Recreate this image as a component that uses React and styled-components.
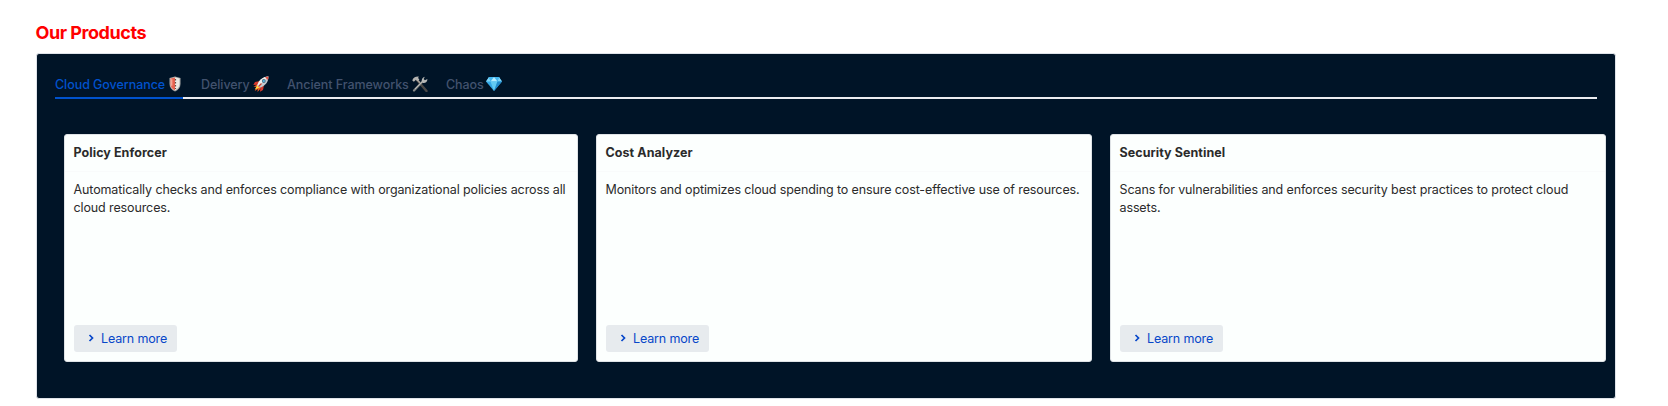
import React from 'react';
import styled, { createGlobalStyle } from 'styled-components';

const GlobalStyle = createGlobalStyle`
  * { box-sizing: border-box; }
  body { margin: 0; background: #fff; font-family: Inter, "Liberation Sans", sans-serif; }
`;

const Page = styled.main`
  height: 406px;
  padding: 20px 52px 0 36px;
  overflow: hidden;
`;

const Heading = styled.h1`
  margin: 0 0 7px -0.5px;
  height: 26px;
  font-size: 18px;
  line-height: 26px;
  font-weight: 700;
  letter-spacing: -0.45px;
  color: #ff0000;
`;

const Panel = styled.section`
  height: 346px;
  padding: 16px 8px 0 18px;
  border: 1px solid #dfe3e9;
  border-radius: 3px;
  background: #001427;
`;

const TabList = styled.nav`
  display: flex;
  gap: 18px;
  width: 1542px;
  height: 29px;
  box-shadow: inset 0 -2px #ebecf0;
`;

const Tab = styled.a`
  display: flex;
  align-items: center;
  width: ${(p) => p.$width}px;
  height: 29px;
  padding-top: 1px;
  border-bottom: 2px solid ${(p) => (p.$active ? '#0052cc' : 'transparent')};
  color: ${(p) => (p.$active ? '#0052cc' : '#42526e')};
  font-size: 12.5px;
  font-weight: 500;
  letter-spacing: -0.06px;
  white-space: nowrap;
`;

const Emoji = styled.svg`
  width: 16px;
  height: 16px;
  flex: none;
  margin-left: auto;
`;

const Cards = styled.div`
  display: grid;
  grid-template-columns: 514px 496px 496px;
  gap: 18px;
  margin: 35px 0 0 9px;
`;

const Card = styled.article`
  display: flex;
  flex-direction: column;
  height: 228px;
  padding: 0 9px 9px;
  border: 1px solid #dfe3e6;
  border-radius: 3px;
  background: #fcfffe;
  color: #2b2b2b;
`;

const CardTitle = styled.h2`
  margin: 0 -9px;
  padding: 0 8.5px;
  height: 37px;
  border-bottom: 1px solid #f9fbfb;
  font-size: 12.5px;
  line-height: 36px;
  font-weight: 700;
  letter-spacing: 0.06px;
`;

const Description = styled.p`
  margin: 9px 0 0 -0.5px;
  font-size: 12.5px;
  line-height: 18px;
  letter-spacing: -0.115px;
  white-space: pre-line;
`;

const LearnMore = styled.button`
  display: flex;
  align-items: center;
  gap: 7px;
  width: 103px;
  height: 27px;
  margin-top: auto;
  padding: 0 0 0 14px;
  border: 0;
  border-radius: 3px;
  background: #e7ebee;
  color: #0747c9;
  font: 400 12.5px Inter, "Liberation Sans", sans-serif;
  letter-spacing: -0.15px;
`;

const Shield = () => (
  <Emoji viewBox="0 0 16 16">
    <path d="M8 .5 13.500 2v6c0 3.500-2.200 6-5.500 7.500C4.700 14 2.500 11.500 2.500 8V2Z" fill="#a9aaa8" />
    <path d="M8 1.400 12.500 2.600v5.300c0 3-1.700 5-4.500 6.400-2.800-1.400-4.500-3.400-4.500-6.400V2.600Z" fill="#eceae3" />
    <path d="M8 1.400v12.900c-2.800-1.400-4.500-3.400-4.500-6.400V2.600Z" fill="#e8634f" />
    <path d="M4.700 3.200v6.500" stroke="#f4aa98" strokeWidth="1.300" />
    <path d="M8.500 3v10" stroke="#68483f" strokeWidth="1.200" strokeDasharray="1.500 1.500" />
  </Emoji>
);

const Rocket = () => (
  <Emoji viewBox="0 0 16 16">
    <path d="m4.500 8-4 3 3-.2L1.800 15l3-2-.3 3 3.500-4Z" fill="#f65b20" />
    <path d="m4.500 9-2.700 4.600 4.800-2Z" fill="#ffda45" />
    <path d="m7 5-5 1-1.700 3 4.500-.3ZM11 9l-1 5-3 1.700.5-4.500Z" fill="#d83a2d" />
    <path d="M4.300 9.300C6 4.200 9 1 15.500.5 15.600 6 12.200 9.800 6.800 11.800Z" fill="#c3cbd0" />
    <path d="M4.300 9.300C6 4.200 9 1 15.500.5L5.700 10.500Z" fill="#eef1ed" />
    <path d="M12 1.300 15.500.5 14.900 4Z" fill="#e55043" />
    <circle cx="10.800" cy="5" r="1.900" fill="#536d83" />
    <circle cx="10.800" cy="5" r="1.100" fill="#54bce7" />
    <path d="m5.500 10.500 3-3" stroke="#c94131" strokeWidth="1.200" />
  </Emoji>
);

const Tools = () => (
  <Emoji viewBox="0 0 16 16">
    <path d="m5 4 9.500 11" stroke="#4a4846" strokeWidth="2.400" strokeLinecap="round" />
    <path d="m5 3.500 4 4.500" stroke="#a8a49e" strokeWidth="1.500" />
    <path d="m2 14.500 9-9.500" stroke="#858786" strokeWidth="2.200" strokeLinecap="round" />
    <path d="m3 13 8-8" stroke="#c8c8c3" strokeWidth=".8" />
    <path d="M10 6C9.200 3.500 10.300 1.200 12.800.7L11.700 3l1.200 1.200L15.400 3c.2 2.500-2 4.500-4.500 4Z" fill="#b5b7b5" />
    <path d="M.3 4.600C1 2 3.200.4 6.800.6L6.100 2l1.300 1.600-2 1.600-1.500-1.500-2 2Z" fill="#b5b4b1" />
  </Emoji>
);

const Gem = () => (
  <Emoji viewBox="0 0 16 16">
    <path d="M3 1h10l3 4.500L8 15 0 5.500Z" fill="#35a9e8" />
    <path d="m3 1 1.500 4.500H0ZM13 1l-1.500 4.500H16Z" fill="#7dd5f7" />
    <path d="M3 1h5L4.500 5.500ZM8 1h5l-1.500 4.500Z" fill="#44b6ed" />
    <path d="m8 1-3.500 4.500h7Z" fill="#b5edff" />
    <path d="M4.500 5.500h7L8 15Z" fill="#62cbf4" />
    <path d="M11.500 5.500H16L8 15Z" fill="#238bcb" />
  </Emoji>
);

const Chevron = styled.svg`
  width: 6px;
  height: 8px;
  flex: none;
  margin-bottom: 2px;
`;

const tabs = [
  { label: 'Cloud Governance', width: 128, icon: Shield },
  { label: 'Delivery', width: 68, icon: Rocket },
  { label: 'Ancient Frameworks', width: 141, icon: Tools },
  { label: 'Chaos', width: 56, icon: Gem },
];

const products = [
  { title: 'Policy Enforcer', text: 'Automatically checks and enforces compliance with organizational policies across all\ncloud resources.' },
  { title: 'Cost Analyzer', text: 'Monitors and optimizes cloud spending to ensure cost-effective use of resources.' },
  { title: 'Security Sentinel', text: 'Scans for vulnerabilities and enforces security best practices to protect cloud\nassets.' },
];

export default function App() {
  return (
    <Page>
      <GlobalStyle />
      <Heading>Our Products</Heading>
      <Panel>
        <TabList>
          {tabs.map(({ label, width, icon: Icon }, i) => (
            <Tab key={label} $width={width} $active={i === 0}>
              {label}
              <Icon />
            </Tab>
          ))}
        </TabList>
        <Cards>
          {products.map(({ title, text }) => (
            <Card key={title}>
              <CardTitle>{title}</CardTitle>
              <Description>{text}</Description>
              <LearnMore>
                <Chevron viewBox="0 0 6 8">
                  <path d="m1.500 1 3 3-3 3" fill="none" stroke="currentColor" strokeWidth="1.700" />
                </Chevron>
                Learn more
              </LearnMore>
            </Card>
          ))}
        </Cards>
      </Panel>
    </Page>
  );
}
